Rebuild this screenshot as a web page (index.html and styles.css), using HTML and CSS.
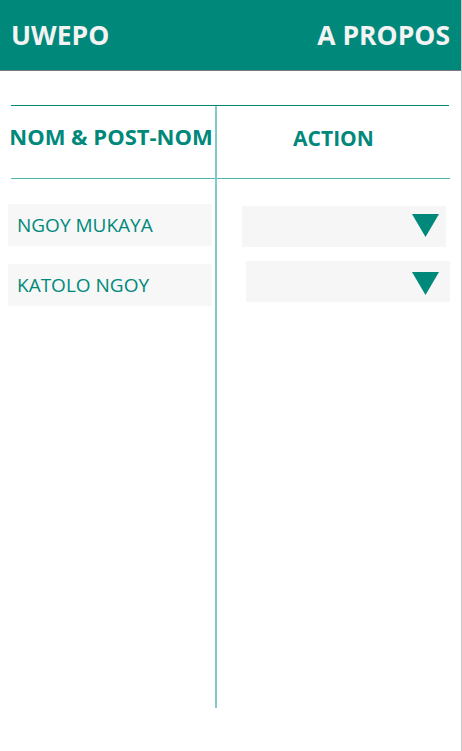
FILE: index.html
```html
<!DOCTYPE html>
<html lang="fr">
<head>
<meta charset="utf-8">
<title>UWEPO</title>
<link rel="stylesheet" href="styles.css">
</head>
<body>
<div class="page">
  <header class="topbar">
    <span class="brand">UWEPO</span>
    <span class="nav">A PROPOS</span>
  </header>
  <main class="table">
    <div class="col col-name">
      <div class="th th-name">NOM &amp; POST-NOM</div>
      <div class="rows rows-name">
        <div class="cell">NGOY MUKAYA</div>
        <div class="cell">KATOLO NGOY</div>
      </div>
    </div>
    <div class="col col-action">
      <div class="th th-action">ACTION</div>
      <div class="rows rows-action">
        <div class="select select-1">
          <svg class="caret" width="27" height="23" viewBox="0 0 27 23"><polygon points="0,0 27,0 13.5,23" fill="#00897b"/></svg>
        </div>
        <div class="select select-2">
          <svg class="caret" width="27" height="23" viewBox="0 0 27 23"><polygon points="0,0 27,0 13.5,23" fill="#00897b"/></svg>
        </div>
      </div>
    </div>
  </main>
</div>
</body>
</html>
```
FILE: styles.css
```css
* { box-sizing: border-box; }
html, body { margin: 0; padding: 0; background: #fff; }
body { font-family: "Open Sans", "Noto Sans", sans-serif; color: #00897b; }

.page {
  width: 462px;
  height: 751px;
  border-right: 1px solid #c8c8c8;
}

.topbar {
  height: 71px;
  background: #00897b;
  border-bottom: 1px solid #7a7a7a;
  display: flex;
  align-items: center;
  justify-content: space-between;
  padding: 0 11px 1px 11px;
  color: #f3f3f3;
  font-weight: 700;
  font-size: 26.5px;
}

.table {
  margin: 34px 12px 0 11px;
  border-top: 1px solid #00897b;
  display: grid;
  grid-template-columns: 206px 1fr;
  height: 603px;
}

.col-name { border-right: 2px solid #80cbc4; }

.th {
  height: 73px;
  border-bottom: 1px solid #4db6ac;
  display: flex;
  justify-content: center;
  font-weight: 700;
  white-space: nowrap;
}
.th-name { padding-top: 15px; padding-right: 4px; font-size: 22px; }
.th-action { padding-top: 18px; font-size: 21px; }

.rows { display: flex; flex-direction: column; }
.rows-name { padding-top: 25px; gap: 18px; margin-left: -3px; }

.cell {
  width: 204px;
  height: 42px;
  background: #f7f7f7;
  padding-left: 9px;
  display: flex;
  align-items: center;
  font-size: 19px;
}

.rows-action { padding-top: 27px; }
.select {
  width: 204px;
  height: 41px;
  background: #f6f6f6;
  display: flex;
  justify-content: flex-end;
  padding-top: 8px;
}
.select-1 { margin-left: 25px; padding-right: 7px; }
.select-2 { margin-left: 29px; margin-top: 14px; padding-right: 11px; padding-top: 11px; }
.caret { display: block; }
```
